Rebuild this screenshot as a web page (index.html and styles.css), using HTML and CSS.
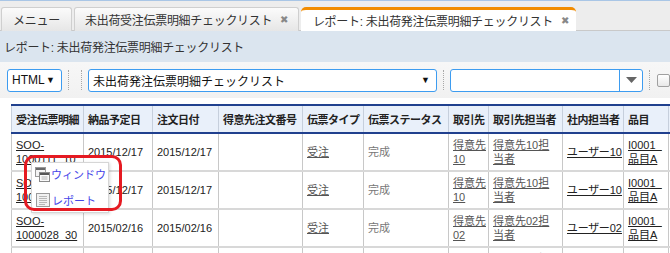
FILE: index.html
```html
<!DOCTYPE html>
<html lang="ja">
<head>
  <meta charset="UTF-8">
  <title>レポート: 未出荷発注伝票明細チェックリスト</title>
  <link rel="stylesheet" href="styles.css">
</head>
<body>
  <div class="tabbar">
    <div class="tab">メニュー</div>
    <div class="tab">未出荷受注伝票明細チェックリスト<span class="close">✖</span></div>
    <div class="tab active">レポート: 未出荷発注伝票明細チェックリスト<span class="close">✖</span></div>
  </div>
  <div class="page-title">レポート: 未出荷発注伝票明細チェックリスト</div>
  <div class="toolbar">
    <div class="select fmt">HTML<span class="caret">▼</span></div>
    <span class="sep"></span>
    <span class="sep wide"></span>
    <div class="select report">未出荷発注伝票明細チェックリスト<span class="caret">▼</span></div>
    <span class="sep"></span>
    <div class="combo">
      <span class="combo-input"></span>
      <span class="combo-btn"><svg width="11" height="6" viewBox="0 0 11 6"><path d="M0 0h11L5.5 6z" fill="#666"/></svg></span>
    </div>
    <span class="sep"></span>
    <span class="check"></span>
  </div>
  <div class="grid">
    <table>
      <colgroup>
        <col style="width:72px"><col style="width:69px"><col style="width:66px"><col style="width:84px">
        <col style="width:61px"><col style="width:85px"><col style="width:40px"><col style="width:74px">
        <col style="width:61px"><col style="width:45px"><col style="width:60px">
      </colgroup>
      <thead>
        <tr>
          <th>受注伝票明細</th><th>納品予定日</th><th>注文日付</th><th>得意先注文番号</th><th>伝票タイプ</th>
          <th>伝票ステータス</th><th>取引先</th><th>取引先担当者</th><th>社内担当者</th><th>品目</th><th></th>
        </tr>
      </thead>
      <tbody>
        <tr>
          <td><a class="dark">SOO-1000111_10</a></td><td>2015/12/17</td><td>2015/12/17</td><td></td>
          <td><a>受注</a></td><td class="muted">完成</td><td><a>得意先10</a></td><td><a>得意先10担当者</a></td>
          <td><a class="dark nowrap">ユーザー10</a></td><td><a class="dark">I0001_品目A</a></td><td></td>
        </tr>
        <tr>
          <td><a class="dark">SOO-1000111_10</a></td><td>2015/12/17</td><td>2015/12/17</td><td></td>
          <td><a>受注</a></td><td class="muted">完成</td><td><a>得意先10</a></td><td><a>得意先10担当者</a></td>
          <td><a class="dark nowrap">ユーザー10</a></td><td><a class="dark">I0001_品目A</a></td><td></td>
        </tr>
        <tr>
          <td><a class="dark">SOO-1000028_30</a></td><td>2015/02/16</td><td>2015/02/16</td><td></td>
          <td><a>受注</a></td><td class="muted">完成</td><td><a>得意先02</a></td><td><a>得意先02担当者</a></td>
          <td><a class="dark nowrap">ユーザー02</a></td><td><a class="dark">I0001_品目A</a></td><td></td>
        </tr>
        <tr>
          <td><a class="dark">SOO-1000028_31</a></td><td>2015/02/16</td><td>2015/02/16</td><td></td>
          <td><a>受注</a></td><td class="muted">完成</td><td><a>得意先02</a></td><td><a>得意先02担当者</a></td>
          <td><a class="dark nowrap">ユーザー02</a></td><td><a class="dark">I0001_品目A</a></td><td></td>
        </tr>
      </tbody>
    </table>
  </div>

  <div class="popup">
    <div class="item">
      <svg class="icon" width="15" height="15" viewBox="0 0 15 15">
        <rect x="0.5" y="0.5" width="10" height="9" fill="#f4f4f4" stroke="#9a9a9a"/>
        <rect x="1" y="1" width="9" height="2" fill="#6a6a6a"/>
        <rect x="4.5" y="5.5" width="10" height="9" fill="#fafafa" stroke="#8a8a8a"/>
        <rect x="5" y="6" width="9" height="2" fill="#555"/>
        <path d="M6.5 10h6M6.5 12h6" stroke="#b0b0b0"/>
      </svg>
      <span>ウィンドウ</span>
    </div>
    <div class="item">
      <svg class="icon" width="14" height="14" viewBox="0 0 14 14">
        <rect x="0.5" y="0.5" width="13" height="13" fill="#f2f2f2" stroke="#9a9a9a"/>
        <path d="M3 3.5h8M3 5.5h8M3 7.5h8M3 9.5h8M3 11.5h6" stroke="#b8b8b8"/>
      </svg>
      <span>レポート</span>
    </div>
  </div>
  <div class="mark"></div>
</body>
</html>
```

FILE: styles.css
```css
* {
  margin: 0;
  padding: 0;
  box-sizing: border-box;
}
body {
  width: 670px;
  height: 253px;
  overflow: hidden;
  position: relative;
  background: #fff;
  font-family: "Liberation Sans", "Noto Sans CJK JP", sans-serif;
  color: #333;
}
.tabbar {
  height: 31px;
  border-top: 1px solid #a9c6e6;
  border-bottom: 1px solid #c9c9c9;
  background: #ededed;
  display: flex;
  align-items: flex-end;
  gap: 2px;
  padding-left: 1px;
}
.tab {
  height: 24px;
  margin-bottom: -1px;
  display: flex;
  align-items: center;
  padding: 0 10px;
  font-size: 12px;
  letter-spacing: -0.3px;
  color: #333;
  white-space: nowrap;
  background: linear-gradient(#fbfbfb, #e6e6e6);
  border: 1px solid #cfcfcf;
  border-bottom: none;
  border-radius: 3px 3px 0 0;
}
.tab:first-child {
  width: 71px;
  justify-content: center;
  padding: 0;
}
.tab.active {
  background: #fff;
  border: none;
  border-top: 3px solid #f28c00;
  border-radius: 5px 5px 0 0;
  padding: 0 7px 0 12px;
}
.close {
  margin-left: 8px;
  font-size: 10px;
  color: #888;
}
.page-title {
  height: 31px;
  background: #dbe5ef;
  padding-left: 4px;
  display: flex;
  align-items: center;
  font-size: 12px;
  letter-spacing: -0.3px;
  color: #333;
}
.toolbar {
  height: 36px;
  background: linear-gradient(#f7f7f7, #f1f1f1);
  display: flex;
  align-items: center;
  padding-left: 7px;
}
.select {
  height: 23px;
  border: 1px solid #3d9cf0;
  border-radius: 3px;
  background: #fff;
  display: flex;
  align-items: center;
  justify-content: space-between;
  font-size: 12px;
  color: #111;
  padding: 0 6px 0 4px;
}
.fmt {
  width: 55px;
}
.report {
  width: 349px;
}
.caret {
  font-size: 9px;
  color: #111;
}
.sep {
  width: 1px;
  height: 20px;
  border-left: 1px dotted #a8a8a8;
  margin: 0 6px;
}
.sep.wide {
  margin-left: 6px;
}
.combo {
  width: 193px;
  height: 23px;
  border: 1px solid #3d9cf0;
  border-radius: 3px;
  background: #fff;
  display: flex;
}
.combo-input {
  flex: 1;
}
.combo-btn {
  width: 23px;
  border-left: 1px solid #3d9cf0;
  display: flex;
  align-items: center;
  justify-content: center;
}
.check {
  width: 13px;
  height: 13px;
  border: 1px solid #a0a0a0;
  border-radius: 2px;
  background: linear-gradient(#fff, #e8e8e8);
  margin-left: 1px;
}
.grid {
  padding: 6px 0 0 11px;
}
table {
  border-collapse: collapse;
  table-layout: fixed;
  width: 717px;
  font-size: 11px;
}
th {
  height: 28px;
  background: #e9f0fa;
  border-top: 2px solid #20408e;
  border-bottom: 2px solid #20408e;
  border-right: 1px solid #c6cfdc;
  text-align: left;
  padding: 0 3px 0 4px;
  font-weight: bold;
  letter-spacing: -0.5px;
  color: #222;
  white-space: nowrap;
  overflow: hidden;
}
th:first-child {
  border-left: 1px solid #c6cfdc;
}
td {
  height: 38px;
  border-bottom: 2px solid #d8d8d8;
  border-right: 1px solid #c8c8c8;
  padding: 0 2px 0 4px;
  line-height: 14px;
  color: #222;
  font-feature-settings: "palt";
}
td:first-child {
  border-left: 1px solid #c8c8c8;
}
a {
  color: #555;
  text-decoration: underline;
}
a.dark {
  color: #222;
}
.nowrap {
  white-space: nowrap;
}
.muted {
  color: #777;
}
.popup {
  position: absolute;
  left: 31px;
  top: 162px;
  width: 78px;
  height: 51px;
  background: #fff;
  border: 1px solid #d6d6d6;
  box-shadow: 1px 1px 3px rgba(0, 0, 0, 0.15);
}
.item {
  height: 24px;
  display: flex;
  align-items: center;
  padding-left: 3px;
  gap: 1px;
  font-size: 11px;
  white-space: nowrap;
  color: #4646e8;
}
.item:first-child {
  margin-top: -1px;
}
.item:last-child {
  height: 27px;
  padding-left: 4px;
  gap: 2px;
}
.mark {
  position: absolute;
  left: 24px;
  top: 155px;
  width: 98px;
  height: 56px;
  border: 3px solid #e51a22;
  border-radius: 10px;
}
```
